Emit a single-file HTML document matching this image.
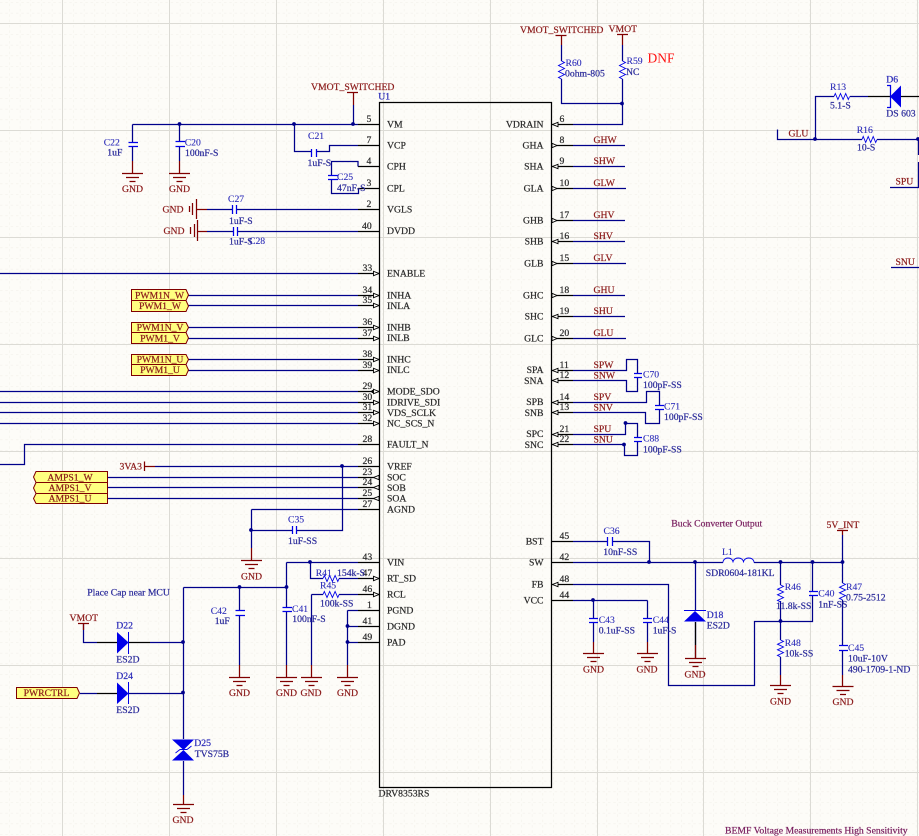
<!DOCTYPE html>
<html><head><meta charset="utf-8"><style>
html,body{margin:0;padding:0;background:#fdfcf8;width:919px;height:836px;overflow:hidden}
svg{display:block;position:absolute;left:0;top:0}
text{font-family:"Liberation Serif",serif;font-size:9.7px;stroke-width:.22}
.p{fill:#2a2a2a;stroke:#2a2a2a}
.n{fill:#8b1a1a;stroke:#8b1a1a}
.d{font-family:"Liberation Sans",sans-serif;font-size:9.4px;fill:#2a2ab8;stroke:#2a2ab8}
.d text{stroke-width:.1}
.e{fill:#2a2ab8;stroke:#2a2ab8}
.v{fill:#2a2a9a;stroke:#2a2a9a}
.w,.r,.k,.b{fill:none;stroke-width:1.25}
.w{stroke:#00008b}.r{stroke:#800000}.k{stroke:#000}.b{stroke:#0000e8}
.z{fill:none;stroke:#0000e8;stroke-width:.9}
.a{stroke:#7a2060;fill:#7a2060}
.grid{filter:none}
</style></head><body>
<svg width="919" height="836" viewBox="0 0 919 836" xmlns="http://www.w3.org/2000/svg">
<defs>
<pattern id="m" x="62.5" y="23.5" width="10.667" height="10.667" patternUnits="userSpaceOnUse">
<path d="M1.5 0H4M6.8 0H9.3M0 1.5V4M0 6.8V9.3" stroke="#f2f0e9" stroke-width="1.2" fill="none"/>
</pattern>
<g id="g" class="r"><path d="M-10.5 .5H10.5M-6.5 4.5H6.5M-3 8.5H3"/></g>
<g id="ai"><path d="M-5.5 -2.2V2.2L0 0Z" fill="#fdfcf8" stroke="#000" stroke-width=".9"/></g>
<g id="ao"><path d="M0 -2.2V2.2L-5.5 0Z" fill="#fdfcf8" stroke="#000" stroke-width=".9"/></g>
<g id="ri"><path d="M5.5 -2.2V2.2L0 0Z" fill="#fdfcf8" stroke="#000" stroke-width=".9"/></g>
<g id="ro"><path d="M0 -2.2V2.2L5 0Z" fill="#fdfcf8" stroke="#000" stroke-width=".9"/></g>
<circle id="j" r="1.9" fill="#00008b"/>
</defs>
<rect width="919" height="836" fill="#fdfcf8"/>
<rect width="919" height="836" fill="url(#m)"/>
<path d="M62.5 0V836M169.5 0V836M276.5 0V836M383.5 0V836M490.5 0V836M597.5 0V836M703.5 0V836M810.5 0V836M917.5 0V836M0 23.5H919M0 130.5H919M0 237.5H919M0 344.5H919M0 451.5H919M0 558.5H919M0 665.5H919M0 772.5H919" stroke="#dcdbd5" fill="none" shape-rendering="crispEdges"/>

<!-- U1 -->
<path class="k" d="M379.5 102.5H551.5V787.5H379.5Z"/>
<path class="k" d="M358 124.5H379M358 145.5H379M358 166.5H379M358 188.5H379M358 209.5H379M358 231.5H379M358 273.5H379M358 295.5H379M358 305.5H379M358 327.5H379M358 338.5H379M358 359.5H379M358 370.5H379M358 391.5H379M358 402.5H379M358 412.5H379M358 423.5H379M358 444.5H379M358 466.5H379M358 477.5H379M358 487.5H379M358 498.5H379M358 509.5H379M358 562.5H379M358 578.5H379M358 594.5H379M358 610.5H379M358 626.5H379M358 642.5H379"/>
<path class="k" d="M552 124.5H573M552 145.5H573M552 166.5H573M552 188.5H573M552 220.5H573M552 241.5H573M552 263.5H573M552 295.5H573M552 316.5H573M552 338.5H573M552 370.5H573M552 380.5H573M552 402.5H573M552 412.5H573M552 434.5H573M552 444.5H573M552 541.5H573M552 562.5H573M552 584.5H573M552 600.5H573"/>

<!-- navy wires -->
<path class="w" d="M132.5 124.5H358M353.5 105V124M132.5 124.5V142M132.5 147V161M179.5 124.5V142M179.5 147V161"/>
<path class="w" d="M294.5 124.5V151.5H311M316 151.5H329.5V145.5H358"/>
<path class="w" d="M358 166.5V161.5H331.5V175M331.5 179V193.5H358.5V188.5"/>
<path class="w" d="M207 209.5H232M236 209.5H358M207 231.5H233M237 231.5H358"/>
<path class="w" d="M0 273.5H358M188 295.5H358M188 305.5H358M188 327.5H358M188 338.5H358M188 359.5H358M188 370.5H358"/>
<path class="w" d="M0 391.5H358M0 402.5H358M0 412.5H358M0 423.5H358M0 464.5H24.5V444.5H358"/>
<path class="w" d="M155 466.5H358M342.5 466.5V530.5H296M292 530.5H251.5M107.5 477.5H358M107.5 487.5H358M107.5 498.5H358M251.5 509.5H358M251.5 509.5V548"/>
<path class="w" d="M286.5 562.5H358M286.5 562.5V607M286.5 612V665M183.5 587.5H286.5M239.5 587.5V610M239.5 616V665M310.5 562.5V578.5H323M339 578.5H358M311.5 594.5H323M339 594.5H358M311.5 594.5V665"/>
<path class="w" d="M347.5 610.5H358M347.5 626.5H358M347.5 642.5H358M347.5 610.5V665"/>
<path class="w" d="M183.5 587.5V739M183.5 761V795M150 642.5H183.5M80 693.5H97M128 693.5H183.5M83.5 623.5V642.5H97"/>
<path class="w" d="M561.5 45V61M561.5 79V103.5H622.5M622.5 45V61M622.5 79V124.5H573"/>
<path class="w" d="M573 145.5H625M573 166.5H625M573 188.5H626M573 220.5H625M573 241.5H625M573 263.5H626M573 295.5H625M573 316.5H625M573 338.5H626"/>
<path class="w" d="M573 370.5H626.5V359.5H637.5V373M637.5 378V391.5H626.5V380.5H573"/>
<path class="w" d="M573 402.5H646.5V391.5H659.5V405M659.5 410V423.5H645.5V412.5H573"/>
<path class="w" d="M573 434.5H625.5V423.5H637.5V437M637.5 442V455.5H624.5V444.5H573"/>
<path class="w" d="M573 541.5H607M612.5 541.5H649.5V562.5M573 562.5H723M754 562.5H842.5M695.5 562.5V610"/>
<path class="w" d="M842.5 535V583M842.5 600V645M842.5 651V675"/>
<path class="w" d="M780.5 562.5V585M780.5 601V640M780.5 657V675M812.5 562.5V592M812.5 596V621.5H754.5V685.5H668.5V584.5H573"/>
<path class="w" d="M573 600.5H647.5M593.5 600.5V618M593.5 623V642M647.5 600.5V618M647.5 623V642M695.5 622V645"/>
<path class="w" d="M777.5 129.5V139.5H862M877 139.5H919M815.5 139.5V96.5H834M850 96.5H868M918.5 139.5V155M918.5 162V188M890 187.5H919M891 267.5H919"/>

<!-- black parts of diodes -->
<path class="k" d="M868 96.5H890M901 96.5H919M97 642.5H117M129 642.5H150M97 693.5H117M695.5 622V658"/>

<!-- dark red stubs -->
<path class="r" d="M347 92.5H358M353.5 92.5V105M555.5 35.5H566.5M561.5 35.5V45M617 34.5H628M622.5 34.5V45M837 530.5H848M842.5 530.5V535M78 623.5H89M83.5 623.5V630"/>
<path class="r" d="M132.5 161V173M179.5 161V173M197 209.5H207M197.5 231.5H207M144.5 461.5V471M144.5 466.5H155M251.5 548V560M239.5 665V677M286.5 665V677M311.5 665V677M347.5 665V677M183.5 795V804M593.5 642V653M647.5 642V653M695.5 645V658M780.5 675V685M842.5 675V686"/>
<path class="r" d="M196.5 199V219M192.5 203V215M189.5 206V212M197.5 220V241M194.5 224V237M190.5 227V234"/>
<use href="#g" x="132.5" y="173"/><use href="#g" x="179.5" y="173"/><use href="#g" x="251.5" y="560"/>
<use href="#g" x="239.5" y="677"/><use href="#g" x="286.5" y="677"/><use href="#g" x="311.5" y="677"/><use href="#g" x="347.5" y="677"/>
<use href="#g" x="183.5" y="804"/><use href="#g" x="593.5" y="653"/><use href="#g" x="647.5" y="653"/><use href="#g" x="695.5" y="658"/>
<use href="#g" x="780.5" y="685"/><use href="#g" x="843" y="686"/>

<!-- caps -->
<path class="b" d="M128.5 142.5H138M128.5 146.5H138M175.5 141.5H185M175.5 146.5H185M311.5 149V157M316.5 149V157M328 175.5H338M328 179.5H338M232.5 205V214M236.5 205V214M233.5 227V236M237.5 227V236M292.5 526V534M296.5 526V534M235.5 610.5H245M235.5 615.5H245M282.5 607.5H292M282.5 611.5H292M634 373.5H642M634 377.5H642M655 405.5H664M655 409.5H664M634 437.5H642M634 441.5H642M607.5 537V546M612.5 537V546M809 591.5H818M809 595.5H818M839 645.5H848M839 650.5H848M589 618.5H598M589 622.5H598M643 618.5H652M643 622.5H652"/>

<!-- resistors -->
<path class="z" d="M561.5 61l3 1.5-6 3 6 3-6 3 6 3-6 3 3 1.5M622.5 61l3 1.5-6 3 6 3-6 3 6 3-6 3 3 1.5M842.5 583l3 1.4-6 2.8 6 2.8-6 2.8 6 2.8-6 2.8 3 1.4M780.5 585l3 1.4-6 2.8 6 2.8-6 2.8 6 2.8-6 2.8 3 1.4M780.5 640l3 1.4-6 2.8 6 2.8-6 2.8 6 2.8-6 2.8 3 1.4"/>
<path class="z" d="M834 96.5l1.3-3 2.6 6 2.6-6 2.6 6 2.6-6 2.6 6 1.3-3M862 139.5l1.2-3 2.5 6 2.5-6 2.5 6 2.5-6 2.5 6 1.3-3M323 578.5l1.3-3 2.7 6 2.7-6 2.7 6 2.7-6 2.7 6 1.3-3M323 594.5l1.3-3 2.7 6 2.7-6 2.7 6 2.7-6 2.7 6 1.3-3"/>
<!-- inductor -->
<path class="z" d="M723 562.5c0-6 10-6 10 0c0-6 10.5-6 10.5 0c0-6 10.5-6 10.5 0"/>

<!-- diodes -->
<g fill="#0000e8">
<path d="M117 632L128.5 642.5L117 653.5Z"/><rect x="128" y="632" width="1" height="22"/>
<path d="M117 682.5L128.5 693.5L117 704Z"/><rect x="128" y="682" width="1" height="22"/>
<path d="M172 739.5H194L183.5 750L194 760.5H172L183.5 750Z"/>
<path d="M695 611L706 621.5H684Z"/><rect x="684" y="610" width="22" height="1"/>
<path d="M890 96.5L901 85.5V107.5Z"/>
</g>
<path class="z" d="M175.5 753L180 749.5H187L191.5 746"/>
<path class="b" d="M887 85.5H890.5V107.5H887"/>

<!-- junctions -->
<use href="#j" x="179.5" y="124"/><use href="#j" x="294" y="124"/><use href="#j" x="353" y="124"/>
<use href="#j" x="342" y="466"/><use href="#j" x="251" y="530"/><use href="#j" x="310" y="562"/>
<use href="#j" x="239.5" y="587"/><use href="#j" x="286.5" y="587"/><use href="#j" x="347.5" y="626"/><use href="#j" x="347.5" y="642"/>
<use href="#j" x="183" y="642"/><use href="#j" x="183" y="692.5"/><use href="#j" x="622" y="103.5"/>
<use href="#j" x="625.5" y="423"/><use href="#j" x="624" y="444.5"/>
<use href="#j" x="649" y="562"/><use href="#j" x="695" y="562"/><use href="#j" x="780.5" y="562"/><use href="#j" x="812.5" y="562"/><use href="#j" x="842.5" y="562"/>
<use href="#j" x="593" y="600"/><use href="#j" x="780.5" y="621"/><use href="#j" x="815" y="139"/><use href="#j" x="918" y="139"/>
<circle cx="373" cy="391.5" r="1.6" fill="#000"/>

<!-- pin arrows -->
<use href="#ai" x="379" y="273.5"/><use href="#ai" x="379" y="295.5"/><use href="#ai" x="379" y="305.5"/><use href="#ai" x="379" y="327.5"/><use href="#ai" x="379" y="338.5"/><use href="#ai" x="379" y="359.5"/><use href="#ai" x="379" y="370.5"/><use href="#ai" x="379" y="391.5"/><use href="#ai" x="379" y="402.5"/><use href="#ai" x="379" y="412.5"/><use href="#ai" x="379" y="423.5"/><use href="#ai" x="379" y="578.5"/><use href="#ai" x="379" y="594.5"/>
<use href="#ao" x="379" y="477.5"/><use href="#ao" x="379" y="487.5"/><use href="#ao" x="379" y="498.5"/>
<use href="#ri" x="552.5" y="124.5"/><use href="#ri" x="552.5" y="166.5"/><use href="#ri" x="552.5" y="241.5"/><use href="#ri" x="552.5" y="316.5"/><use href="#ri" x="552.5" y="370.5"/><use href="#ri" x="552.5" y="380.5"/><use href="#ri" x="552.5" y="402.5"/><use href="#ri" x="552.5" y="412.5"/><use href="#ri" x="552.5" y="434.5"/><use href="#ri" x="552.5" y="444.5"/><use href="#ri" x="552.5" y="584.5"/>
<use href="#ro" x="552" y="145.5"/><use href="#ro" x="552" y="188.5"/><use href="#ro" x="552" y="220.5"/><use href="#ro" x="552" y="263.5"/><use href="#ro" x="552" y="295.5"/><use href="#ro" x="552" y="338.5"/>

<!-- ports -->
<g fill="#ffff80" stroke="#800000" stroke-width="1">
<path d="M131.5 289.5H186L188.5 295L186 300.5H131.5Z"/><path d="M131.5 300.5H186L188.5 306L186 311.5H131.5Z"/>
<path d="M131.5 322.5H186L188.5 327.5L186 332.5H131.5Z"/><path d="M131.5 332.5H186L188.5 338L186 343.5H131.5Z"/>
<path d="M131.5 354.5H186L188.5 359.5L186 364.5H131.5Z"/><path d="M131.5 364.5H186L188.5 370L186 375.5H131.5Z"/>
<path d="M107.5 471.5H36L33.5 477L36 482.5H107.5Z"/><path d="M107.5 482.5H36L33.5 488L36 493.5H107.5Z"/><path d="M107.5 493.5H36L33.5 498.5L36 503.5H107.5Z"/>
<path d="M16.5 687.5H77L79.5 693L77 698.5H16.5Z"/>
</g>

<!-- pin labels left -->
<g class="p">
<text x="387" y="127.5">VM</text><text x="387" y="148.5">VCP</text><text x="387" y="169.5">CPH</text><text x="387" y="191.5">CPL</text><text x="387" y="212.5">VGLS</text><text x="387" y="234">DVDD</text><text x="387" y="276.5">ENABLE</text><text x="387" y="298.5">INHA</text><text x="387" y="309">INLA</text><text x="387" y="330.5">INHB</text><text x="387" y="341">INLB</text><text x="387" y="362.5">INHC</text><text x="387" y="373">INLC</text><text x="387" y="394.5">MODE_SDO</text><text x="387" y="405.5">IDRIVE_SDI</text><text x="387" y="416">VDS_SCLK</text><text x="387" y="426.5">NC_SCS_N</text><text x="387" y="447.5">FAULT_N</text><text x="387" y="469.5">VREF</text><text x="387" y="480.5">SOC</text><text x="387" y="491">SOB</text><text x="387" y="501.5">SOA</text><text x="387" y="512.5">AGND</text><text x="387" y="565.5">VIN</text><text x="387" y="581.5">RT_SD</text><text x="387" y="597.5">RCL</text><text x="387" y="613.5">PGND</text><text x="387" y="629.5">DGND</text><text x="387" y="645.5">PAD</text>
<text x="378.5" y="796.5">DRV8353RS</text>
</g>
<!-- pin labels right -->
<g class="p" text-anchor="end">
<text x="543.5" y="127.5">VDRAIN</text><text x="543.5" y="148.5">GHA</text><text x="543.5" y="169.5">SHA</text><text x="543.5" y="191.5">GLA</text><text x="543.5" y="223.5">GHB</text><text x="543.5" y="244.5">SHB</text><text x="543.5" y="266.5">GLB</text><text x="543.5" y="298.5">GHC</text><text x="543.5" y="319.5">SHC</text><text x="543.5" y="341.5">GLC</text><text x="543.5" y="373">SPA</text><text x="543.5" y="384">SNA</text><text x="543.5" y="405">SPB</text><text x="543.5" y="416">SNB</text><text x="543.5" y="437">SPC</text><text x="543.5" y="448">SNC</text><text x="543.5" y="544.5">BST</text><text x="543.5" y="565.5">SW</text><text x="543.5" y="587.5">FB</text><text x="543.5" y="603.5">VCC</text>
</g>
<!-- pin numbers -->
<g class="p">
<text x="366.5" y="122">5</text><text x="366.5" y="143">7</text><text x="366.5" y="164">4</text><text x="366.5" y="186">3</text><text x="366.5" y="207">2</text><text x="362" y="229">40</text><text x="362.5" y="271">33</text><text x="362.5" y="293">34</text><text x="362.5" y="303">35</text><text x="362.5" y="325">36</text><text x="362.5" y="336">37</text><text x="362.5" y="357">38</text><text x="362.5" y="368">39</text><text x="362.5" y="389">29</text><text x="362.5" y="400">30</text><text x="362.5" y="410">31</text><text x="362.5" y="421">32</text><text x="362.5" y="442">28</text><text x="362.5" y="464">26</text><text x="362.5" y="475">23</text><text x="362.5" y="485">24</text><text x="362.5" y="496">25</text><text x="362.5" y="507">27</text><text x="362.5" y="560">43</text><text x="362.5" y="576">47</text><text x="362.5" y="592">46</text><text x="367" y="608">1</text><text x="362.5" y="624">41</text><text x="362.5" y="640">49</text>
<text x="559.5" y="122">6</text><text x="559.5" y="143">8</text><text x="559.5" y="164">9</text><text x="559.5" y="186">10</text><text x="559.5" y="218">17</text><text x="559.5" y="239">16</text><text x="559.5" y="261">15</text><text x="559.5" y="293">18</text><text x="559.5" y="314">19</text><text x="559.5" y="336">20</text><text x="559.5" y="368">11</text><text x="559.5" y="378">12</text><text x="559.5" y="400">14</text><text x="559.5" y="410">13</text><text x="559.5" y="432">21</text><text x="559.5" y="442">22</text><text x="559.5" y="539">45</text><text x="559.5" y="560">42</text><text x="559.5" y="582">48</text><text x="559.5" y="598">44</text>
</g>

<!-- net labels -->
<g class="n">
<text x="311" y="90">VMOT_SWITCHED</text><text x="520" y="33">VMOT_SWITCHED</text><text x="608.5" y="32">VMOT</text>
<text x="593.5" y="143">GHW</text><text x="593.5" y="164">SHW</text><text x="593.5" y="186">GLW</text><text x="593.5" y="218">GHV</text><text x="593.5" y="239">SHV</text><text x="593.5" y="261">GLV</text><text x="593.5" y="293">GHU</text><text x="593.5" y="314">SHU</text><text x="593.5" y="336">GLU</text>
<text x="593.5" y="368">SPW</text><text x="593.5" y="378.5">SNW</text><text x="593.5" y="400">SPV</text><text x="593.5" y="410.5">SNV</text><text x="593.5" y="432">SPU</text><text x="593.5" y="442.5">SNU</text>
<text x="788.5" y="136.5">GLU</text><text x="895.5" y="184.5">SPU</text><text x="895.5" y="265">SNU</text>
<text x="119.5" y="469.5">3VA3</text><text x="69.5" y="621">VMOT</text><text x="826.5" y="528">5V_INT</text>
<text x="162.5" y="212.5">GND</text><text x="163.5" y="234">GND</text>
<g text-anchor="middle">
<text x="132.5" y="192">GND</text><text x="179.5" y="192">GND</text><text x="251.5" y="579.5">GND</text><text x="239.5" y="696">GND</text><text x="286.5" y="696">GND</text><text x="311" y="696">GND</text><text x="347.5" y="696">GND</text><text x="183" y="823">GND</text><text x="593.5" y="672.5">GND</text><text x="647" y="672.5">GND</text><text x="695" y="677.5">GND</text><text x="780.5" y="704.5">GND</text><text x="843" y="705">GND</text>
<text x="159.5" y="298.5">PWM1N_W</text><text x="160" y="309">PWM1_W</text><text x="160" y="330.5">PWM1N_V</text><text x="160" y="341.5">PWM1_V</text><text x="160" y="362.5">PWM1N_U</text><text x="160" y="373">PWM1_U</text>
<text x="70" y="480.5">AMPS1_W</text><text x="70" y="491">AMPS1_V</text><text x="70" y="501.5">AMPS1_U</text>
<text x="46.5" y="696">PWRCTRL</text>
</g>
</g>
<text x="647.5" y="62.5" style="font-size:13.5px;fill:#ff1010;stroke:none">DNF</text>

<!-- designators -->
<g class="d">
<text x="103.7" y="145.5">C22</text><text x="184.7" y="145.5">C20</text><text x="308" y="139">C21</text><text x="337" y="180">C25</text><text x="228" y="202">C27</text><text x="249" y="244">C28</text><text x="288" y="522.5">C35</text><text x="210.7" y="614">C42</text><text x="292" y="612">C41</text><text x="315.7" y="576">R41</text><text x="320" y="588.5">R45</text>
<text x="565.5" y="66">R60</text><text x="626.5" y="64">R59</text><text x="830" y="90">R13</text><text x="856.7" y="133">R16</text>
<text x="643" y="377.5">C70</text><text x="664" y="409.5">C71</text><text x="643" y="441.7">C88</text>
<text x="603.5" y="534">C36</text><text x="722" y="555">L1</text><text x="784.7" y="590">R46</text><text x="846" y="590">R47</text><text x="818.3" y="596.5">C40</text><text x="784.7" y="646">R48</text><text x="848" y="651">C45</text><text x="598.7" y="623">C43</text><text x="652.7" y="623">C44</text>
</g>
<g class="e">
<text x="378.3" y="99.5">U1</text><text x="886.3" y="82.5">D6</text><text x="116.3" y="628.7">D22</text><text x="116.3" y="679">D24</text><text x="194.3" y="746">D25</text><text x="706.7" y="618">D18</text>
</g>
<!-- values -->
<g class="v">
<text x="107.3" y="155.5">1uF</text><text x="185" y="156">100nF-S</text><text x="307.5" y="166">1uF-S</text><text x="337" y="191">47nF-S</text><text x="229" y="224">1uF-S</text><text x="229" y="244.5">1uF-S</text><text x="288" y="544">1uF-SS</text><text x="214.7" y="624">1uF</text><text x="292.3" y="622">100nF-S</text><text x="337" y="576">154k-S</text><text x="320" y="606.7">100k-SS</text>
<text x="87.3" y="595.3">Place Cap near MCU</text>
<text x="116.3" y="662.7">ES2D</text><text x="116.3" y="713">ES2D</text><text x="194.7" y="757">TVS75B</text>
<text x="565" y="76.5">0ohm-805</text><text x="626" y="75">NC</text><text x="830" y="108.7">5.1-S</text><text x="886.3" y="116.5">DS 603</text><text x="857" y="150.7">10-S</text>
<text x="643" y="388">100pF-SS</text><text x="664" y="420">100pF-SS</text><text x="643" y="452.3">100pF-SS</text>
<text x="603.3" y="555">10nF-SS</text><text x="705.7" y="576">SDR0604-181KL</text><text x="776" y="609">11.8k-SS</text><text x="846" y="600.7">0.75-2512</text><text x="818.3" y="607.3">1nF-SS</text><text x="784.7" y="656.3">10k-SS</text>
<text x="848" y="661.7">10uF-10V</text><text x="848" y="672.3">490-1709-1-ND</text><text x="598.7" y="633.7">0.1uF-SS</text><text x="652.7" y="633.7">1uF-S</text><text x="706.7" y="628.3">ES2D</text>
</g>
<g class="a">
<text x="671.3" y="526.7">Buck Converter Output</text>
<text x="725" y="833.7">BEMF Voltage Measurements High Sensitivity</text>
</g>
</svg>
</body></html>
